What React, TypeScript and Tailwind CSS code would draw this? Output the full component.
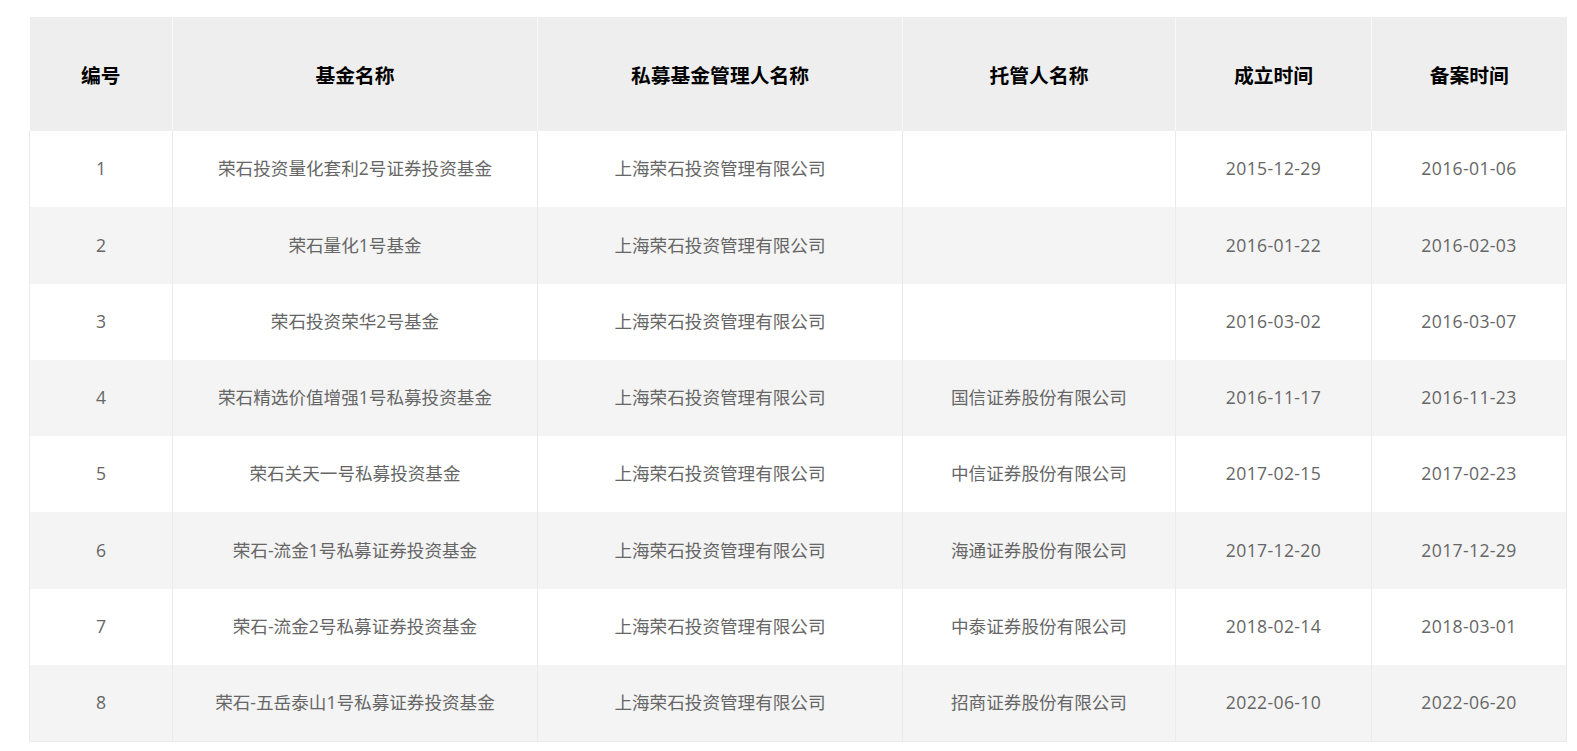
import React from "react";

const rows = [
  ["1", "荣石投资量化套利2号证券投资基金", "上海荣石投资管理有限公司", "", "2015-12-29", "2016-01-06"],
  ["2", "荣石量化1号基金", "上海荣石投资管理有限公司", "", "2016-01-22", "2016-02-03"],
  ["3", "荣石投资荣华2号基金", "上海荣石投资管理有限公司", "", "2016-03-02", "2016-03-07"],
  ["4", "荣石精选价值增强1号私募投资基金", "上海荣石投资管理有限公司", "国信证券股份有限公司", "2016-11-17", "2016-11-23"],
  ["5", "荣石关天一号私募投资基金", "上海荣石投资管理有限公司", "中信证券股份有限公司", "2017-02-15", "2017-02-23"],
  ["6", "荣石-流金1号私募证券投资基金", "上海荣石投资管理有限公司", "海通证券股份有限公司", "2017-12-20", "2017-12-29"],
  ["7", "荣石-流金2号私募证券投资基金", "上海荣石投资管理有限公司", "中泰证券股份有限公司", "2018-02-14", "2018-03-01"],
  ["8", "荣石-五岳泰山1号私募证券投资基金", "上海荣石投资管理有限公司", "招商证券股份有限公司", "2022-06-10", "2022-06-20"],
];

const headers = ["编号", "基金名称", "私募基金管理人名称", "托管人名称", "成立时间", "备案时间"];
const widths = ["w-[143px]", "w-[365px]", "w-[365px]", "w-[273px]", "w-[196px]", "w-[195px]"];

export default function App() {
  return (
    <div className="min-h-[751px] bg-white pt-[17px] pl-[29px]" style={{ fontFamily: '"Open Sans", "Noto Sans CJK SC", sans-serif' }}>
      <table className="table-fixed border-collapse w-[1538px]">
        <colgroup>
          {widths.map((w, i) => (
            <col key={i} className={w} />
          ))}
        </colgroup>
        <thead>
          <tr className="h-[114px] bg-[#eeeeee]">
            {headers.map((h, i) => (
              <th
                key={i}
                className={`pt-[3px] text-center align-middle text-[19.8px] font-bold text-black leading-none ${i > 0 ? "border-l border-[#f9f9f9]" : ""}`}
              >
                {h}
              </th>
            ))}
          </tr>
        </thead>
        <tbody>
          {rows.map((r, ri) => (
            <tr key={ri} className={`h-[76.25px] ${ri % 2 === 1 ? "bg-[#f4f4f4]" : "bg-white"}`}>
              {r.map((c, ci) => (
                <td
                  key={ci}
                  className={`text-center align-middle text-[17.6px] text-[#666666] leading-none border-[#eaeaea] ${ci >= 4 ? "tracking-[0.35px]" : ""} ${ci === 0 ? "border-l" : ""} border-r ${ri === rows.length - 1 ? "border-b" : ""}`}
                >
                  {c}
                </td>
              ))}
            </tr>
          ))}
        </tbody>
      </table>
    </div>
  );
}
